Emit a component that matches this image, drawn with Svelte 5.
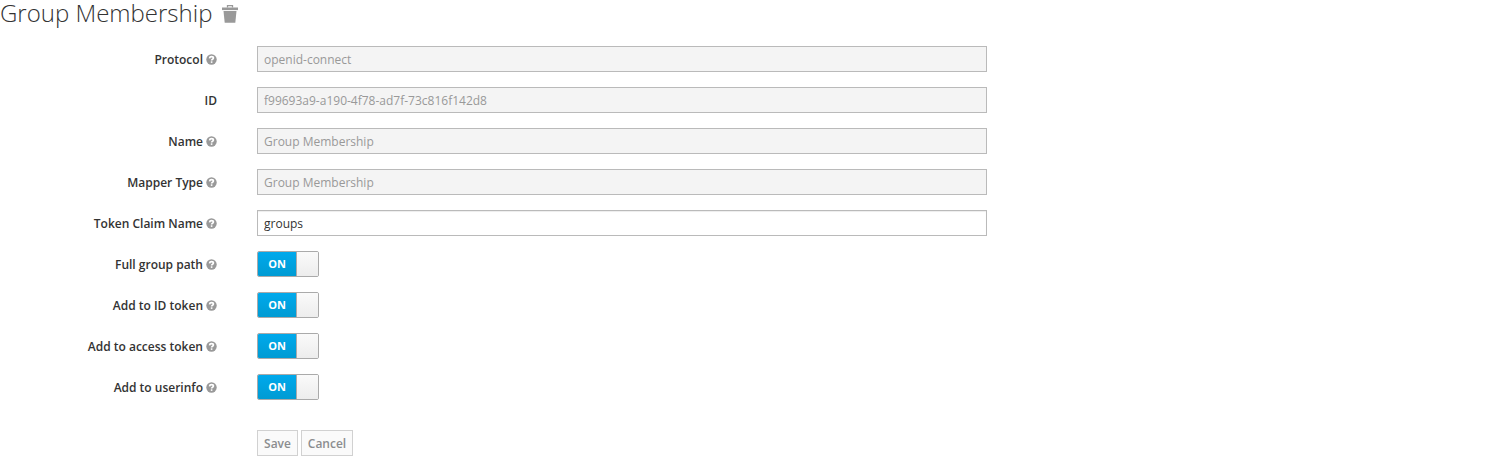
<script>
  const fields = [
    { label: 'Protocol', value: 'openid-connect', help: true, disabled: true },
    { label: 'ID', value: 'f99693a9-a190-4f78-ad7f-73c816f142d8', help: false, disabled: true },
    { label: 'Name', value: 'Group Membership', help: true, disabled: true },
    { label: 'Mapper Type', value: 'Group Membership', help: true, disabled: true },
    { label: 'Token Claim Name', value: 'groups', help: true, disabled: false }
  ];
  let toggles = $state([
    { label: 'Full group path', on: true },
    { label: 'Add to ID token', on: true },
    { label: 'Add to access token', on: true },
    { label: 'Add to userinfo', on: true }
  ]);
</script>

{#snippet help()}
  <svg class="help" width="11" height="11" viewBox="0 0 11 11" aria-hidden="true">
    <circle cx="5.5" cy="5.5" r="5.2" fill="#999" />
    <path d="M3.5 4.3C3.7 3.1 4.4 2.6 5.5 2.6C6.7 2.6 7.4 3.2 7.4 4.1C7.4 5.2 5.6 5.2 5.6 6.5" fill="none" stroke="#fff" stroke-width="1.7" />
    <rect x="4.8" y="7.3" width="1.6" height="1.6" fill="#fff" />
  </svg>
{/snippet}

<main>
  <h1>
    <span>Group Membership</span>
    <svg class="trash" width="16" height="19" viewBox="0 0 16 19" aria-hidden="true">
      <path d="M5.5 3.5V1.7H10.5V3.5" fill="none" stroke="#999" stroke-width="1.3" />
      <rect x="0" y="3.5" width="16" height="2.6" fill="#999" />
      <path d="M1.5 7H14.5L13.3 18.8H2.7Z" fill="#999" />
    </svg>
  </h1>
  <form onsubmit={(e) => e.preventDefault()}>
    {#each fields as f, i}
      <div class="row">
        <label for={'f' + i}>{f.label}{#if f.help}{@render help()}{/if}</label>
        <input id={'f' + i} type="text" value={f.value} disabled={f.disabled} />
      </div>
    {/each}
    {#each toggles as t, i}
      <div class="row">
        <label for={'t' + i}>{t.label}{@render help()}</label>
        <button id={'t' + i} type="button" class="switch" class:off={!t.on} onclick={() => (t.on = !t.on)}>
          <span class="state">{t.on ? 'ON' : 'OFF'}</span>
          <span class="knob"></span>
        </button>
      </div>
    {/each}
    <div class="actions">
      <button type="button" class="btn">Save</button>
      <button type="button" class="btn cancel">Cancel</button>
    </div>
  </form>
</main>

<style>
  :global(body) {
    margin: 0;
    background: #fff;
  }
  main {
    height: 456px;
    font: 12px/18px 'Open Sans', sans-serif;
    color: #333;
  }
  h1 {
    display: flex;
    height: 26px;
    margin: 0 0 20px;
    font-size: 24px;
    line-height: 26px;
    font-weight: 300;
  }
  .trash {
    margin: 4px 0 0 10px;
  }
  form {
    display: flex;
    flex-direction: column;
    gap: 15px;
  }
  .row {
    display: grid;
    grid-template-columns: 217px 730px;
    column-gap: 40px;
    height: 26px;
  }
  label {
    display: flex;
    justify-content: flex-end;
    align-items: center;
    padding-top: 2px;
    height: 24px;
    font-weight: 600;
    white-space: nowrap;
  }
  .help {
    margin: 0 0 1px 3px;
  }
  input {
    box-sizing: border-box;
    width: 730px;
    height: 26px;
    margin: 0;
    padding: 2px 6px;
    border: 1px solid #bababa;
    border-radius: 0;
    background: #fff;
    box-shadow: inset 0 1px 1px rgba(0, 0, 0, 0.075);
    color: #333;
    font: 12px/18px 'Open Sans', sans-serif;
  }
  input:disabled {
    background: #f4f4f4;
    box-shadow: none;
    color: #999;
  }
  .switch {
    box-sizing: border-box;
    display: flex;
    width: 62px;
    height: 26px;
    padding: 0;
    border: 1px solid #aaa;
    border-radius: 2px;
    overflow: hidden;
    background: #fff;
    font: 700 11px/24px 'Open Sans', sans-serif;
  }
  .state {
    width: 38px;
    height: 24px;
    background: linear-gradient(#00a9ec, #009bd3);
    color: #fff;
    text-align: center;
  }
  .knob {
    box-sizing: border-box;
    width: 22px;
    height: 24px;
    border-left: 1px solid #aaa;
    background: linear-gradient(#fafafa, #ededed);
  }
  .off {
    flex-direction: row-reverse;
  }
  .off .state {
    background: #fff;
    color: #333;
  }
  .actions {
    display: flex;
    gap: 3px;
    margin: 15px 0 0 257px;
  }
  .btn {
    box-sizing: border-box;
    width: 41px;
    height: 26px;
    padding: 2px 0 0;
    border: 1px solid #d1d1d1;
    background: #fafafa;
    color: #8b8d8f;
    font: 600 12px/20px 'Open Sans', sans-serif;
  }
  .cancel {
    width: 52px;
  }
</style>
